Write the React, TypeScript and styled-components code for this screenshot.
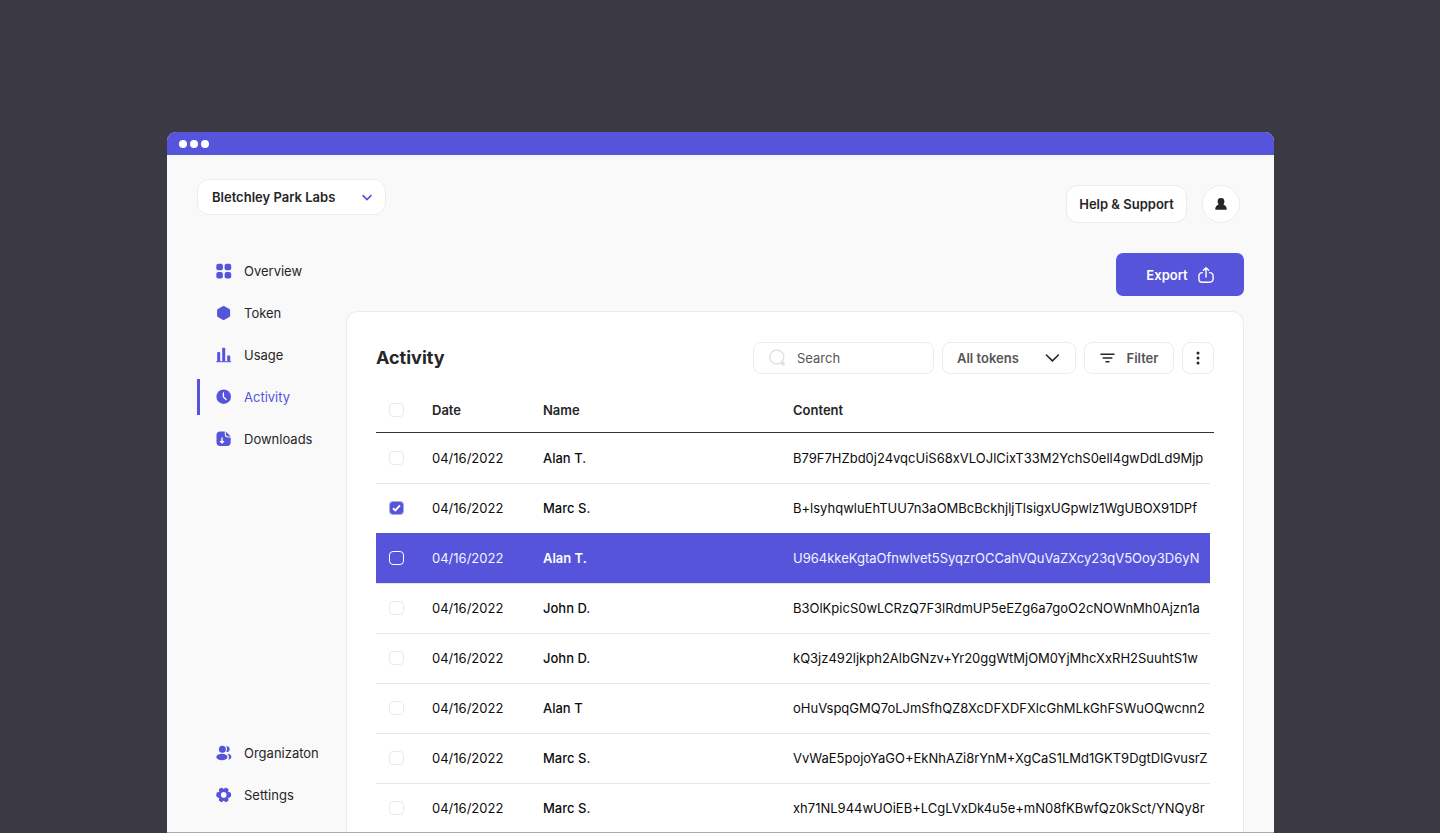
import React from "react";
import styled, { createGlobalStyle, css } from "styled-components";

const color = {
  accent: "#5654db",
  backdrop: "#3b3a44",
  surface: "#f9f9f9",
  line: "#ececec",
  ink: "#262626",
  muted: "#555555",
};

const GlobalStyle = createGlobalStyle`
  *, *::before, *::after { box-sizing: border-box; }
  body {
    margin: 0;
    background: ${color.backdrop};
    color: ${color.ink};
    font-family: Inter, "Liberation Sans", sans-serif;
    font-size: 13px;
  }
  button, input, select { font: inherit; color: inherit; }
`;

const Page = styled.div`
  height: 100vh;
  padding: 132px 166px 0 167px;
  display: flex;
  overflow: hidden;
`;

const Window = styled.div`
  flex: 1;
  min-width: 0;
  display: flex;
  flex-direction: column;
  background: ${color.surface};
  border-bottom: 1px solid #aaaaae;
  border-radius: 9px 9px 0 0;
  overflow: hidden;
`;

const TitleBar = styled.div`
  flex: none;
  height: 23px;
  padding: 1px 12px 0;
  display: flex;
  align-items: center;
  gap: 3px;
  background: ${color.accent};
`;

const WindowDot = styled.span`
  width: 8px;
  height: 8px;
  border-radius: 50%;
  background: #fff;
`;

const Header = styled.header`
  flex: none;
  padding: 24px 34px 0 30px;
  display: flex;
  justify-content: space-between;
  align-items: flex-start;
`;

const HeaderActions = styled.div`
  display: flex;
  gap: 15px;
  padding-top: 6px;
`;

const SelectBox = styled.div<{ $width: number }>`
  display: grid;
  align-items: center;
  width: ${(p) => p.$width}px;
  > * { grid-area: 1 / 1; }
  > svg {
    justify-self: end;
    margin-right: 14px;
    pointer-events: none;
  }
`;

const boxed = css`
  background: #fff;
  border: 1px solid ${color.line};
  border-radius: 8px;
`;

const Select = styled.select<{ $large?: boolean }>`
  ${boxed}
  appearance: none;
  width: 100%;
  height: ${(p) => (p.$large ? 36 : 32)}px;
  border-radius: ${(p) => (p.$large ? 12 : 8)}px;
  padding: 0 14px;
  font-weight: 600;
  color: ${(p) => (p.$large ? color.ink : color.muted)};
`;

const HelpButton = styled.button`
  ${boxed}
  height: 38px;
  width: 121px;
  padding: 0;
  border-radius: 12px;
  font-weight: 600;
`;

const AvatarButton = styled.button`
  ${boxed}
  width: 38px;
  height: 38px;
  padding: 0;
  border-radius: 50%;
  display: grid;
  place-items: center;
`;

const Body = styled.div`
  flex: 1;
  min-height: 0;
  display: grid;
  grid-template-columns: 179px minmax(0, 1fr);
  grid-template-rows: minmax(0, 1fr);
  padding-right: 30px;
`;

const Sidebar = styled.nav`
  display: flex;
  flex-direction: column;
  justify-content: space-between;
  padding: 30px 0 19px 30px;
`;

const NavList = styled.div`
  display: flex;
  flex-direction: column;
  gap: 6px;
`;

const NavLink = styled.a<{ $active?: boolean }>`
  height: 36px;
  display: flex;
  align-items: center;
  gap: 12px;
  padding-left: 16px;
  border-left: 3px solid ${(p) => (p.$active ? color.accent : "transparent")};
  color: ${(p) => (p.$active ? color.accent : color.ink)};
  text-decoration: none;
  > svg { color: ${color.accent}; flex: none; }
`;

const Main = styled.main`
  display: flex;
  flex-direction: column;
  align-items: stretch;
  padding-top: 30px;
`;

const ExportButton = styled.button`
  flex: none;
  align-self: flex-end;
  width: 128px;
  height: 43px;
  padding: 0;
  display: flex;
  align-items: center;
  justify-content: center;
  gap: 10px;
  border: 0;
  border-radius: 7px;
  background: ${color.accent};
  color: #fff;
  font-weight: 600;
`;

const Card = styled.section`
  ${boxed}
  flex: 1;
  min-height: 0;
  margin-top: 15px;
  padding: 30px 29px 0;
  border-bottom: 0;
  border-radius: 12px 12px 0 0;
  overflow: hidden;
`;

const Toolbar = styled.div`
  display: flex;
  align-items: center;
  gap: 8px;
`;

const Title = styled.h1`
  margin: 0 auto 0 0;
  font-size: 18px;
  line-height: 32px;
  font-weight: 700;
`;

const SearchBox = styled.label`
  ${boxed}
  width: 181px;
  height: 32px;
  padding: 0 15px;
  display: flex;
  align-items: center;
  gap: 10px;
  > svg { flex: none; }
`;

const SearchInput = styled.input`
  min-width: 0;
  flex: 1;
  border: 0;
  padding: 0;
  outline: 0;
  background: none;
  &::placeholder { color: ${color.muted}; opacity: 1; }
`;

const ToolButton = styled.button<{ $width: number }>`
  ${boxed}
  width: ${(p) => p.$width}px;
  height: 32px;
  padding: 0;
  display: flex;
  align-items: center;
  justify-content: center;
  gap: 12px;
  font-weight: 600;
  color: ${color.muted};
`;

const Table = styled.table`
  width: 100%;
  margin-top: 14px;
  table-layout: fixed;
  border-collapse: separate;
  border-spacing: 0;
`;

const Col = styled.col<{ $width?: number }>`
  width: ${(p) => (p.$width ? `${p.$width}px` : "auto")};
`;

const HeadCell = styled.th`
  height: 45px;
  padding: 0;
  text-align: left;
  font-weight: 600;
  border-bottom: 1px solid #333;
`;

const Cell = styled.td<{ $strong?: boolean }>`
  height: 50px;
  padding: 0 0 2px;
  white-space: nowrap;
  font-weight: ${(p) => (p.$strong ? 500 : 400)};
  border-top: 1px solid #e6e6e6;
`;

const Row = styled.tr<{ $highlight?: boolean }>`
  color: #0c0c0c;
  &:first-child ${Cell} { border-top-color: transparent; }
  ${(p) =>
    p.$highlight &&
    css`
      color: #f4f4ff;
      ${Cell} {
        background: ${color.accent};
        border-top-color: ${color.accent};
      }
      ${Cell}:nth-child(3) {
        color: #fff;
        font-weight: 600;
      }
    `}
`;

const CheckWrap = styled.span`
  display: grid;
  width: 15px;
  height: 14px;
  margin-left: 13px;
  place-items: center;
  > * { grid-area: 1 / 1; }
  > svg { pointer-events: none; }
`;

const CheckInput = styled.input<{ $light?: boolean }>`
  appearance: none;
  margin: 0;
  width: 15px;
  height: 14px;
  border: 1px solid ${(p) => (p.$light ? "#fff" : "#eaeaea")};
  border-radius: 4px;
  &:checked {
    background: ${color.accent};
    border-color: #aaa9ec;
  }
`;

function Check({ label, checked, light }: { label: string; checked?: boolean; light?: boolean }) {
  return (
    <CheckWrap>
      <CheckInput type="checkbox" aria-label={label} defaultChecked={checked} $light={light} />
      {checked && (
        <svg width="9" height="8" viewBox="0 0 9 8" fill="none" stroke="#fff" strokeWidth="1.9">
          <path d="M1 4.2 3.3 6.4 8 1.4" />
        </svg>
      )}
    </CheckWrap>
  );
}

const Svg = ({ children }: { children: React.ReactNode }) => (
  <svg width={16} height={16} viewBox="0 0 16 16" fill="currentColor" aria-hidden="true">
    {children}
  </svg>
);

const icons = {
  overview: (
    <Svg>
      <rect x="0.3" y="0.8" width="6.600" height="6.400" rx="2" />
      <rect x="8.600" y="0.8" width="6.600" height="6.400" rx="2" />
      <rect x="0.3" y="9" width="6.600" height="6.400" rx="2" />
      <rect x="8.600" y="9" width="6.600" height="6.400" rx="2" />
    </Svg>
  ),
  token: (
    <Svg>
      <path d="M6.700 1.300a1.800 1.800 0 0 1 1.800 0l4.800 2.700a1.600 1.600 0 0 1 .8 1.400v5.300a1.600 1.600 0 0 1-.8 1.400l-4.800 2.700a1.800 1.800 0 0 1-1.800 0l-4.800-2.700a1.600 1.600 0 0 1-.8-1.400V5.400a1.600 1.600 0 0 1 .8-1.400z" />
    </Svg>
  ),
  usage: (
    <Svg>
      <path d="M.2 14.200h15v1H.2z" />
      <rect x="1.200" y="5" width="3" height="10" rx=".8" />
      <rect x="6.200" y=".8" width="3" height="14" rx=".8" />
      <rect x="11.200" y="8.600" width="3" height="6" rx=".8" />
    </Svg>
  ),
  activity: (
    <Svg>
      <circle cx="7.700" cy="7.700" r="7.300" />
      <path d="M7.400 4v4l2.700 2.500" fill="none" stroke="#fff" strokeWidth="1.300" strokeLinecap="round" />
    </Svg>
  ),
  downloads: (
    <Svg>
      <path d="M4.200.4h4.600v3.200a3 3 0 0 0 3 3h2.900v4.600a3.700 3.700 0 0 1-3.700 3.700H4.200a3.700 3.700 0 0 1-3.700-3.700V4.100A3.700 3.700 0 0 1 4.200.4z" />
      <path d="M9.900.5 14.700 5.500h-2.800a2 2 0 0 1-2-2z" />
      <path d="M6 7v5M4.400 10.400 6 12l1.600-1.600" fill="none" stroke="#fff" strokeWidth="1.300" strokeLinecap="round" strokeLinejoin="round" />
    </Svg>
  ),
  organization: (
    <Svg>
      <circle cx="6.400" cy="4.200" r="3.500" />
      <ellipse cx="5.900" cy="12" rx="5.600" ry="3.300" />
      <path d="M10.200 1.400c2-.3 3.500 1 3.500 2.800s-1.500 3.100-3.500 2.800c1.100-1.700 1.100-3.900 0-5.600zM11.500 8.700c2.300.2 3.900 1.400 3.900 3s-1.300 2.600-3.100 2.800c1.200-1.700.9-4.100-.8-5.800z" />
    </Svg>
  ),
  settings: (
    <Svg>
      <path
        fillRule="evenodd"
        d="M5 .9c.8-.4 1.600 0 2 .7.300.6 1.100.6 1.400 0 .4-.7 1.200-1.100 2-.7l1.300.7c.8.5 1 1.400.6 2.200-.4.7 0 1.300.8 1.300 1 0 1.700.8 1.900 1.600l.2 1.200-.2 1.200c-.2.8-.9 1.600-1.900 1.600-.8 0-1.200.6-.8 1.300.4.8.2 1.700-.6 2.200l-1.300.7c-.8.4-1.600 0-2-.7-.3-.6-1.100-.6-1.400 0-.4.700-1.200 1.100-2 .7l-1.300-.7c-.8-.5-1-1.400-.6-2.200.4-.7 0-1.300-.8-1.300-1 0-1.700-.8-1.900-1.600L.2 7.900l.2-1.200c.2-.8.9-1.600 1.900-1.600.8 0 1.200-.6.8-1.300-.4-.8-.2-1.700.6-2.200zM7.700 5.100a2.800 2.800 0 1 0 0 5.600 2.800 2.800 0 0 0 0-5.600z"
      />
    </Svg>
  ),
};

type IconName = keyof typeof icons;
type NavEntry = { label: string; icon: IconName; active?: boolean };

const primaryNav: NavEntry[] = [
  { label: "Overview", icon: "overview" },
  { label: "Token", icon: "token" },
  { label: "Usage", icon: "usage" },
  { label: "Activity", icon: "activity", active: true },
  { label: "Downloads", icon: "downloads" },
];

const secondaryNav: NavEntry[] = [
  { label: "Organizaton", icon: "organization" },
  { label: "Settings", icon: "settings" },
];

const rows = [
  { name: "Alan T.", content: "B79F7HZbd0j24vqcUiS68xVLOJlCixT33M2YchS0ell4gwDdLd9Mjp" },
  { name: "Marc S.", content: "B+lsyhqwluEhTUU7n3aOMBcBckhjljTlsigxUGpwlz1WgUBOX91DPf", checked: true },
  { name: "Alan T.", content: "U964kkeKgtaOfnwlvet5SyqzrOCCahVQuVaZXcy23qV5Ooy3D6yN", highlight: true },
  { name: "John D.", content: "B3OlKpicS0wLCRzQ7F3lRdmUP5eEZg6a7goO2cNOWnMh0Ajzn1a" },
  { name: "John D.", content: "kQ3jz492ljkph2AlbGNzv+Yr20ggWtMjOM0YjMhcXxRH2SuuhtS1w" },
  { name: "Alan T", content: "oHuVspqGMQ7oLJmSfhQZ8XcDFXDFXlcGhMLkGhFSWuOQwcnn2" },
  { name: "Marc S.", content: "VvWaE5pojoYaGO+EkNhAZi8rYnM+XgCaS1LMd1GKT9DgtDlGvusrZ" },
  { name: "Marc S.", content: "xh71NL944wUOiEB+LCgLVxDk4u5e+mN08fKBwfQz0kSct/YNQy8r" },
];

const Nav = ({ items }: { items: NavEntry[] }) => (
  <NavList>
    {items.map((item) => (
      <NavLink key={item.label} href="#" $active={item.active}>
        {icons[item.icon]}
        {item.label}
      </NavLink>
    ))}
  </NavList>
);

export default function App() {
  return (
    <>
      <GlobalStyle />
      <Page>
        <Window>
          <TitleBar>
            <WindowDot />
            <WindowDot />
            <WindowDot />
          </TitleBar>
          <Header>
            <SelectBox $width={189}>
              <Select $large aria-label="Workspace">
                <option>Bletchley Park Labs</option>
              </Select>
              <svg width="10" height="8" viewBox="0 0 10 8" fill="none" stroke={color.accent} strokeWidth="1.700">
                <path d="M.6 2.200 5 6.600 9.400 2.200" />
              </svg>
            </SelectBox>
            <HeaderActions>
              <HelpButton>Help &amp; Support</HelpButton>
              <AvatarButton aria-label="Account">
                <svg width="12" height="12" viewBox="0 0 12 12" fill={color.ink}>
                  <path d="M6 0a3.400 3.400 0 0 1 3.400 3.400c0 1.200-.4 2.200-1 3 2 .6 3.200 2.200 3.400 4.700 0 .5-.2.7-.6.7H.8c-.4 0-.6-.2-.6-.7.2-2.500 1.400-4.100 3.400-4.700-.6-.8-1-1.800-1-3A3.400 3.400 0 0 1 6 0z" />
                </svg>
              </AvatarButton>
            </HeaderActions>
          </Header>
          <Body>
            <Sidebar>
              <Nav items={primaryNav} />
              <Nav items={secondaryNav} />
            </Sidebar>
            <Main>
              <ExportButton>
                Export
                <svg width="16" height="16" viewBox="0 0 16 16" fill="none" stroke="#fff" strokeWidth="1.400" strokeLinecap="round" strokeLinejoin="round">
                  <path d="M8 10V1.200M5.400 3.200 8 .8l2.600 2.400M4.400 5.600A3.300 3.300 0 0 0 .9 8.900V12a3.200 3.200 0 0 0 3.200 3.200h7.800a3.200 3.200 0 0 0 3.200-3.200V8.900a3.300 3.300 0 0 0-3.500-3.300" />
                </svg>
              </ExportButton>
              <Card>
                <Toolbar>
                  <Title>Activity</Title>
                  <SearchBox>
                    <svg width="18" height="18" viewBox="0 0 18 18" fill="none">
                      <circle cx="7.800" cy="8" r="7" stroke="#e2e2e2" strokeWidth="1.500" />
                      <circle cx="14" cy="14.600" r="1.900" fill="#dedede" />
                    </svg>
                    <SearchInput type="text" placeholder="Search" aria-label="Search" />
                  </SearchBox>
                  <SelectBox $width={134}>
                    <Select aria-label="Token filter">
                      <option>All tokens</option>
                    </Select>
                    <svg width="18" height="10" viewBox="0 0 18 10" fill="none" stroke={color.ink} strokeWidth="1.600" strokeLinecap="round" strokeLinejoin="round">
                      <path d="M2.400 2 8.400 7.800l6-5.800" />
                    </svg>
                  </SelectBox>
                  <ToolButton $width={90}>
                    <svg width="15" height="10" viewBox="0 0 15 10" stroke={color.ink} strokeWidth="1.500" strokeLinecap="round">
                      <path d="M1 1.200h13M3.200 5h8.600M6 8.800h3" />
                    </svg>
                    Filter
                  </ToolButton>
                  <ToolButton $width={32} aria-label="More options">
                    <svg width="4" height="14" viewBox="0 0 4 14" fill={color.ink}>
                      <circle cx="2" cy="2" r="1.500" />
                      <circle cx="2" cy="7" r="1.500" />
                      <circle cx="2" cy="12" r="1.500" />
                    </svg>
                  </ToolButton>
                </Toolbar>
                <Table>
                  <colgroup>
                    <Col $width={56} />
                    <Col $width={111} />
                    <Col $width={250} />
                    <Col />
                    <Col $width={4} />
                  </colgroup>
                  <thead>
                    <tr>
                      <HeadCell>
                        <Check label="Select all" />
                      </HeadCell>
                      <HeadCell>Date</HeadCell>
                      <HeadCell>Name</HeadCell>
                      <HeadCell colSpan={2}>Content</HeadCell>
                    </tr>
                  </thead>
                  <tbody>
                    {rows.map((row) => (
                      <Row key={row.content} $highlight={row.highlight}>
                        <Cell>
                          <Check label={`Select ${row.name}`} checked={row.checked} light={row.highlight} />
                        </Cell>
                        <Cell>04/16/2022</Cell>
                        <Cell $strong>{row.name}</Cell>
                        <Cell>{row.content}</Cell>
                      </Row>
                    ))}
                  </tbody>
                </Table>
              </Card>
            </Main>
          </Body>
        </Window>
      </Page>
    </>
  );
}
